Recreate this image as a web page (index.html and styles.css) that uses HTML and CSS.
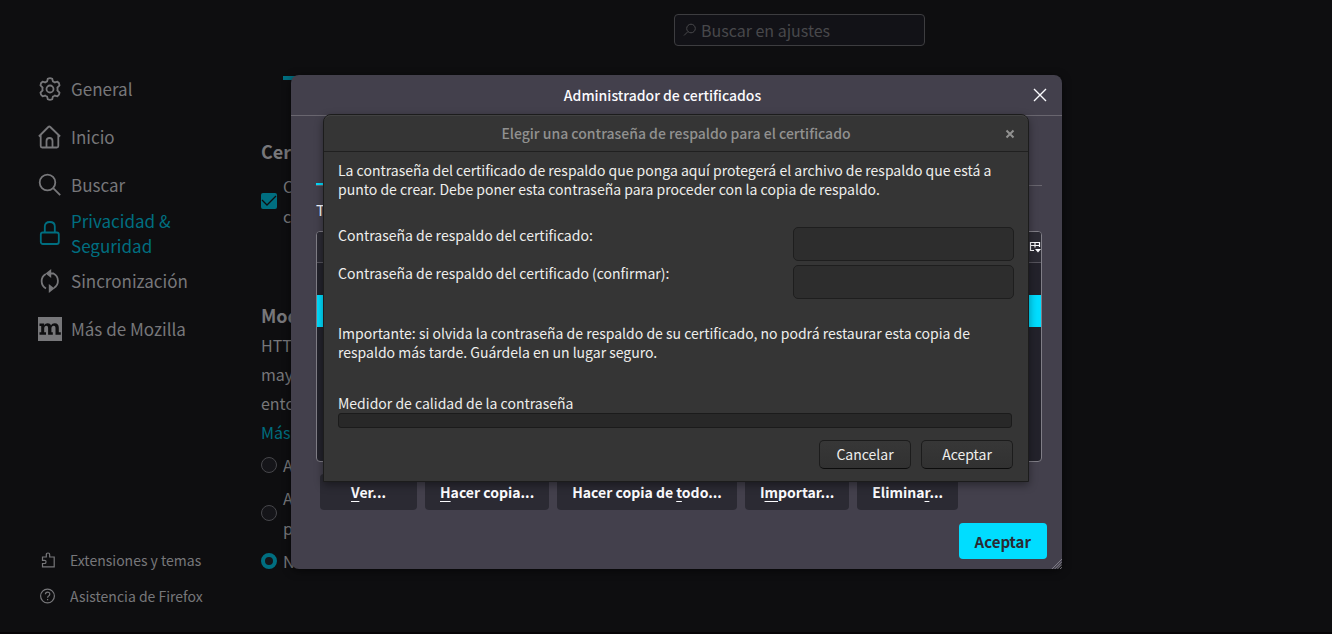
FILE: index.html
```html
<!DOCTYPE html>
<html lang="es">
<head>
<meta charset="utf-8">
<title>Ajustes</title>
<link rel="stylesheet" href="styles.css">
</head>
<body>
<div class="page">
  <nav class="sidebar">
    <div class="nav-main">
      <a class="nav-item" href="#general"><svg class="icon" viewBox="0 0 24 24"><path d="M9.800 1.700q2.200-1.200 4.400 0l.7 2.700q1 .4 1.800 1l2.600-.8q2.300 1.300 2.200 3.800L19.400 10.500q.3 1.500 0 3l2.100 2.100q.1 2.500-2.200 3.800l-2.600-.8q-.8.6-1.800 1l-.7 2.700q-2.200 1.200-4.400 0l-.7-2.700q-1-.4-1.800-1l-2.600.8Q2.400 18.100 2.500 15.600l2.100-2.100q-.3-1.500 0-3L2.500 8.400Q2.400 5.900 4.700 4.600l2.600.8q.8-.6 1.800-1z"/><circle cx="12" cy="12" r="3.500"/></svg><span>General</span></a>
      <a class="nav-item" href="#inicio"><svg class="icon" viewBox="0 0 24 24"><path d="M.9 11.500 10.300 2q1-1 2 0l9.800 9.500M2.700 10v11q0 1.500 1.500 1.500h14.600q1.500 0 1.500-1.500V10M8.500 22v-6q0-3 3-3t3 3v6"/></svg><span>Inicio</span></a>
      <a class="nav-item" href="#buscar"><svg class="icon" viewBox="0 0 24 24"><circle cx="9.500" cy="9.500" r="7.800"/><path d="m15.200 15.200 7 7"/></svg><span>Buscar</span></a>
      <a class="nav-item active" href="#privacidad"><svg class="icon" viewBox="0 0 24 24"><rect x="2.800" y="11.500" width="18" height="11.500" rx="2"/><path d="M6.800 11V5.500q0-4.500 5-4.500t5 4.500V11"/></svg><span>Privacidad &amp; Seguridad</span></a>
      <a class="nav-item" href="#sincronizacion"><svg class="icon" viewBox="0 0 24 24"><path d="M7.800 5A8.300 8.300 0 0 0 8 19.500M15.800 19A8.300 8.300 0 0 0 15.500 4.500h-3"/><path class="fill" d="M13.200 0v9L7.500 4.500zM10.800 15v9l5.700-4.500z"/></svg><span>Sincronización</span></a>
      <a class="nav-item" href="#mozilla"><svg class="icon" viewBox="0 0 24 24"><path class="solid" d="M0 0h24v24H0z"/><path class="mark" d="M1.500 6.500h4.700v2C7 7 8 6.200 9.700 6.200c1.700 0 2.800.8 3.300 2.300.8-1.500 2-2.300 3.800-2.300 2.700 0 4 1.500 4 4.500v4.500h2v2.600h-5.300v-6.300c0-1.800-.4-2.700-1.700-2.700-1.500 0-2.400 1-2.400 3v3.400h1.400v2.600h-4.700v-6.300c0-1.800-.4-2.700-1.600-2.700-1.500 0-2.300 1-2.300 3v3.400h1.800v2.600H1.500v-2.600h1.700V9.100H1.500z"/></svg><span>Más de Mozilla</span></a>
    </div>
    <div class="nav-foot">
      <a class="foot-item" href="#extensiones"><svg class="icon-small" viewBox="0 0 16 16"><path d="M2.500 5h3.800V2.800Q6.300 1 8 1t1.700 1.800V5h4.500v9.800H2.500v-3.300h2q1.500 0 1.500-1.600T4.500 8.300h-2z"/></svg><span>Extensiones y temas</span></a>
      <a class="foot-item" href="#asistencia"><svg class="icon-small" viewBox="0 0 16 16"><circle cx="7.500" cy="8" r="6.900"/><path d="M5.400 6.300q0-2.200 2.200-2.200t2.200 2Q9.800 7.300 8.600 8 7.600 8.500 7.600 9.700M7.600 11v1.300"/></svg><span>Asistencia de Firefox</span></a>
    </div>
  </nav>

  <main class="content">
    <div class="search-row">
      <label class="search"><svg class="search-icon" viewBox="0 0 14 14"><circle cx="8" cy="5.500" r="4.300"/><path d="M5 8.500 1 12.500"/></svg><input type="search" aria-label="Buscar en ajustes" placeholder="Buscar en ajustes"></label>
    </div>
    <div class="marker"></div>
    <h2>Cert</h2>
    <div class="option tall-check"><input id="ocsp" type="checkbox" checked><label for="ocsp">Co<br>ce</label></div>
    <h2 class="mode-title">Modo</h2>
    <p class="description">HTTP<br>mayo<br>enton<br><a href="#mas">Más</a></p>
    <div class="option"><input id="mode-a" type="radio" name="mode"><label for="mode-a">Ac</label></div>
    <div class="option tall"><input id="mode-b" type="radio" name="mode"><label for="mode-b">Ac<br>pr</label></div>
    <div class="option"><input id="mode-c" type="radio" name="mode" checked><label for="mode-c">No</label></div>
  </main>
</div>

<div class="overlay">
  <section class="manager" role="dialog" aria-labelledby="manager-title">
    <header class="manager-head">
      <h1 id="manager-title">Administrador de certificados</h1>
      <button class="manager-close" aria-label="Cerrar"><svg viewBox="0 0 14 14"><path d="m1 1 12 12M13 1 1 13"/></svg></button>
    </header>
    <div class="manager-body">
      <div class="tabs"><div class="tab"></div></div>
      <p class="note">Ti</p>
      <div class="cert-list">
        <div class="list-head"><button class="picker" aria-label="Columnas"><svg viewBox="0 0 12 12"><path d="M5 9.500H1.500v-8h9V6M1.500 4.500h9M6 1.500v5"/><path class="fill" d="M6 8h6l-3 3.500z"/></svg></button></div>
        <div class="list-row"></div>
        <div class="list-row selected"></div>
      </div>
      <div class="actions">
        <button><u>V</u>er...</button>
        <button><u>H</u>acer copia...</button>
        <button>Hacer copia de <u>t</u>odo...</button>
        <button>I<u>m</u>portar...</button>
        <button>Elimina<u>r</u>...</button>
      </div>
      <div class="confirm"><button>Aceptar</button></div>
    </div>
    <svg class="grip" viewBox="0 0 12 12"><path d="M1 12 12 1M4 12l8-8M7 12l5-5M10 12l2-2"/></svg>
  </section>
</div>

<div class="overlay top">
  <form class="prompt" role="dialog" aria-labelledby="prompt-title">
    <header class="prompt-head">
      <h2 id="prompt-title">Elegir una contraseña de respaldo para el certificado</h2>
      <button type="button" class="prompt-close" aria-label="Cerrar"><svg viewBox="0 0 10 10"><path d="m1.500 1.500 7 7M8.500 1.500l-7 7"/></svg></button>
    </header>
    <div class="prompt-body">
      <p>La contraseña del certificado de respaldo que ponga aquí protegerá el archivo de respaldo que está a<br>punto de crear. Debe poner esta contraseña para proceder con la copia de respaldo.</p>
      <div class="fields">
        <label for="pw1">Contraseña de respaldo del certificado:</label><input id="pw1" type="password">
        <label for="pw2">Contraseña de respaldo del certificado (confirmar):</label><input id="pw2" type="password">
      </div>
      <p>Importante: si olvida la contraseña de respaldo de su certificado, no podrá restaurar esta copia de<br>respaldo más tarde. Guárdela en un lugar seguro.</p>
      <div class="quality"><span id="quality">Medidor de calidad de la contraseña</span><div class="meter" role="meter" aria-labelledby="quality" aria-valuenow="0"></div></div>
      <div class="prompt-actions"><button type="button">Cancelar</button><button type="button">Aceptar</button></div>
    </div>
  </form>
</div>
</body>
</html>
```

FILE: styles.css
```css
* { box-sizing: border-box; }
body {
  margin: 0;
  background: #0e0e10;
  color: #77777a;
  font-family: "Noto Sans CJK SC", "Noto Sans", sans-serif;
  font-size: 17px;
}
h1, h2, p { margin: 0; }
a { color: inherit; text-decoration: none; }
button, input { font: inherit; margin: 0; }
svg { display: block; flex: none; fill: none; stroke: currentColor; }
.fill { fill: currentColor; stroke: none; }
.page { display: flex; min-height: 100vh; overflow: hidden; border-bottom: 2px solid #060406; }
.sidebar {
  width: 240px;
  padding: 65px 30px 18px 38px;
  display: flex;
  flex-direction: column;
  justify-content: space-between;
}
.nav-item { display: flex; align-items: center; gap: 9px; height: 48px; line-height: 24px; }
.nav-item.active { color: #006e80; line-height: 25px; }
.icon { width: 24px; height: 24px; stroke-width: 1.8; }
.solid { fill: currentColor; stroke: none; }
.mark { fill: #0e0e10; stroke: none; }
.foot-item { display: flex; align-items: center; gap: 14px; height: 36px; padding-left: 2px; font-size: 14px; white-space: nowrap; }
.icon-small { width: 16px; height: 16px; stroke-width: 1.2; }
.content { width: 664px; margin-left: 21px; padding-top: 14px; }
.search-row { display: flex; justify-content: flex-end; }
.search {
  display: flex;
  align-items: center;
  gap: 4px;
  width: 251px;
  height: 32px;
  padding: 0 8px;
  border: 1px solid #3d3d40;
  border-radius: 4px;
  background: #121217;
  color: #48484b;
}
.search-icon { width: 14px; height: 14px; }
.search input { flex: 1; min-width: 0; padding: 0; border: 0; outline: 0; background: none; font-size: 16px; }
.search input::placeholder { color: #48484b; opacity: 1; }
.marker { width: 80px; height: 4px; margin: 30px 0 0 22px; background: #006e80; }
.content h2 { margin-top: 58px; font-size: 18px; line-height: 26px; }
.option { display: flex; align-items: center; gap: 6px; min-height: 34px; font-size: 16px; line-height: 30px; }
.option input { appearance: none; width: 16px; height: 16px; flex: none; border: 1px solid #47474b; border-radius: 50%; background: #151519; }
.option input[type="radio"]:checked { border: 4px solid #006e80; }
.option input[type="checkbox"] {
  border: 0;
  border-radius: 2px;
  background: #006e80 url("data:image/svg+xml,%3Csvg xmlns='http://www.w3.org/2000/svg' viewBox='0 0 16 16'%3E%3Cpath d='M1 7l5 5 9-9' fill='none' stroke='%230e0e10' stroke-width='1.300'/%3E%3C/svg%3E");
}
.option.tall { min-height: 62px; }
.tall-check { margin-top: 7px; }
.content .mode-title { margin-top: 71px; }
.description { padding: 3px 0 1px; font-size: 16px; line-height: 29px; }
.description a { color: #006e80; }

.overlay { position: absolute; inset: 0; display: flex; justify-content: center; align-items: flex-start; padding: 75px 0 0 21px; }
.overlay.top { padding: 114px 0 0 20px; }
.manager { position: relative; width: 771px; border-radius: 8px; background: #43404c; color: #fbfbfe; box-shadow: 0 2px 8px #0008; font-size: 15px; }
.manager-head { display: flex; align-items: center; height: 41px; padding: 0 15px; border-bottom: 1px solid #69666f; }
.manager-head h1 { flex: 1; padding-right: 14px; text-align: center; font-size: 14px; font-weight: 500; }
.manager-close { width: 14px; height: 14px; padding: 0; border: 0; background: none; color: inherit; }
.manager-close svg { width: 14px; height: 14px; stroke-width: 1.4; }
.manager-body { padding: 0 15px 10px 25px; }
.tabs { height: 70px; margin-right: 5px; border-bottom: 1px solid #69666f; display: flex; align-items: flex-end; }
.tab { width: 120px; height: 2px; background: #00ddff; }
.note { padding-top: 12px; line-height: 24px; }
.cert-list { height: 231px; margin: 9px 5px 0 0; border: 1px solid #807e87; border-radius: 4px; background: #23222b; overflow: hidden; }
.list-head { display: flex; align-items: center; justify-content: flex-end; height: 31px; background: #2b2a33; border-bottom: 1px solid #55535c; }
.picker { padding: 0; border: 0; background: none; color: inherit; }
.picker svg { width: 12px; height: 12px; stroke-width: 1.2; }
.list-row { height: 32px; }
.selected { background: #00ddff; }
.actions { display: flex; gap: 8px; margin: 12px 0 0 4px; }
.actions button { height: 36px; padding: 0 15px; min-width: 97px; border: 0; border-radius: 4px; background: #2b2a33; color: inherit; font-weight: 700; font-size: 14px; white-space: nowrap; }
.actions u { text-underline-offset: 3px; }
.confirm { display: flex; justify-content: flex-end; margin-top: 13px; }
.confirm button { height: 36px; padding: 0 16px; border: 0; border-radius: 4px; background: #00ddff; color: #2b2a33; font-weight: 700; }
.grip { position: absolute; right: 0; bottom: 0; width: 11px; height: 11px; color: #8b8992; stroke-width: 1; }

.prompt { width: 706px; border: 1px solid #1c1c1c; border-radius: 8px 8px 0 0; background: #353535; color: #eeeeec; box-shadow: 0 3px 9px #0006; font-size: 14px; line-height: 19px; }
.prompt-head { display: flex; align-items: center; height: 37px; padding: 0 13px; border-bottom: 1px solid #202020; border-top: 1px solid #424242; border-radius: 7px 7px 0 0; color: #919190; }
.prompt-head h2 { flex: 1; padding-left: 10px; text-align: center; font-size: 14px; font-weight: 500; }
.prompt-close { padding: 0; border: 0; background: none; color: inherit; }
.prompt-close svg { width: 10px; height: 10px; stroke-width: 2; }
.prompt-body { padding: 9px 14px 12px; }
.fields { display: grid; grid-template-columns: 1fr 221px; gap: 4px; margin: 28px 0 25px; }
.fields label { line-height: 17px; }
.fields input { height: 34px; padding: 0 8px; border: 1px solid #1e1e1e; border-radius: 5px; background: #2d2d2d; color: inherit; }
.quality { margin-top: 32px; }
.meter { height: 15px; margin-right: 2px; border: 1px solid #1b1b1b; border-radius: 3px; background: #282828; }
.prompt-actions { display: flex; justify-content: flex-end; gap: 10px; margin: 12px 1px 0 0; }
.prompt-actions button { width: 92px; height: 29px; padding: 0; border: 1px solid #1c1c1c; border-bottom-color: #0c0c0c; border-radius: 5px; background: linear-gradient(#373737, #313131); color: inherit; }
```
